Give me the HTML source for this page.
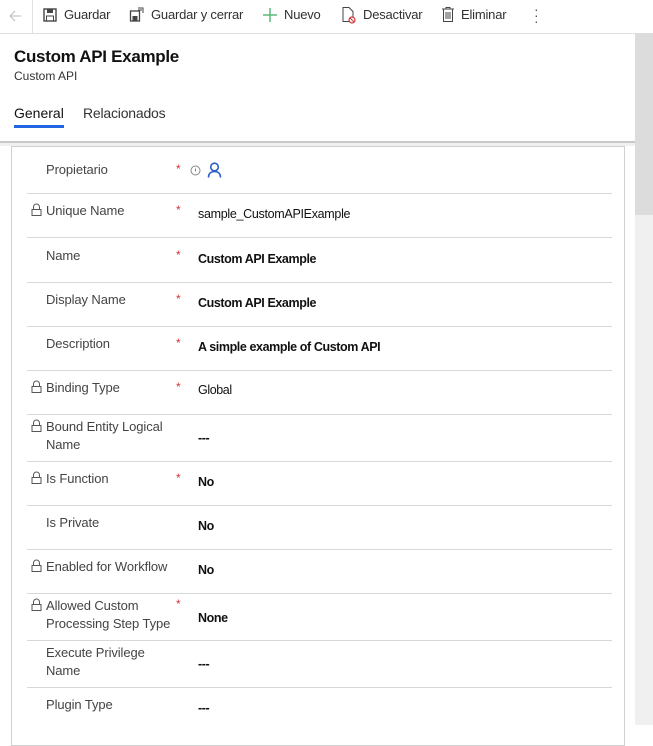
<!DOCTYPE html>
<html><head><meta charset="utf-8"><style>
*{margin:0;padding:0;box-sizing:border-box}
body{width:653px;height:725px;overflow:hidden;background:#fff;font-family:"Segoe UI","Liberation Sans",sans-serif;color:#323130;position:relative}
.a{position:absolute;white-space:nowrap}
.tb{font-size:13px;color:#323130;top:6px;line-height:18px;letter-spacing:-0.2px}
.lbl{font-size:13px;color:#444;line-height:18px;left:46px;letter-spacing:-0.1px}
.val{font-size:12.5px;color:#111;font-weight:bold;left:198px;line-height:18px;letter-spacing:-0.4px}
.star{color:#d13438;font-size:12px;left:176px}
.div{position:absolute;left:27px;width:585px;height:1px;background:#d8d8d8}
.lock{position:absolute;left:31px}
</style></head><body>
<div class="a" style="left:0;top:33px;width:635px;height:1px;background:#e1e1e1"></div>
<div class="a" style="left:32px;top:0;width:1px;height:33px;background:#e1e1e1"></div>
<svg class="a" style="left:7px;top:8px" width="16" height="16"><path d="M14 8H3M8 3L3 8l5 5" stroke="#bbb" fill="none" stroke-width="1"/></svg>
<svg class="a" style="left:43px;top:7px" width="14" height="16"><rect x="1" y="2" width="12" height="12" fill="none" stroke="#444" stroke-width="1.4"/><rect x="4" y="2" width="6" height="4" fill="#444"/><rect x="3.5" y="9" width="7" height="5" fill="none" stroke="#444"/></svg>
<div class="a tb" style="left:64px">Guardar</div>
<svg class="a" style="left:129px;top:6px" width="16" height="17"><rect x="1.5" y="5" width="9" height="10" fill="none" stroke="#444" stroke-width="1.3"/><rect x="3.5" y="10" width="5" height="5" fill="#444"/><path d="M9 2h5v5M9 4h4" stroke="#444" fill="none"/></svg>
<div class="a tb" style="left:151px">Guardar y cerrar</div>
<svg class="a" style="left:262px;top:7px" width="16" height="16"><path d="M8 1v14M1 8h14" stroke="#5cb87a" stroke-width="1.5"/></svg>
<div class="a tb" style="left:284px">Nuevo</div>
<svg class="a" style="left:341px;top:6px" width="16" height="18"><path d="M2 1.5h6l4 4v10H2z" fill="none" stroke="#444"/><circle cx="11" cy="14" r="3" fill="#fff" stroke="#d13438" stroke-width="1.2"/><path d="M9 12l4 4" stroke="#d13438"/></svg>
<div class="a tb" style="left:363px">Desactivar</div>
<svg class="a" style="left:441px;top:6px" width="14" height="17"><path d="M1 3h12M5 3V1.5h4V3M2.5 3.5v12h9v-12M5 6v7M7 6v7M9 6v7" stroke="#444" fill="none"/></svg>
<div class="a tb" style="left:461px">Eliminar</div>
<div class="a" style="left:534px;top:6px;font-size:14px;color:#555;line-height:6px;width:4px;text-align:center">·<br>·<br>·</div>
<div class="a" style="left:635px;top:33px;width:18px;height:692px;background:#f0f0f0"></div>
<div class="a" style="left:635px;top:33px;width:18px;height:182px;background:#dcdcdc"></div>
<div class="a" style="left:14px;top:46px;font-size:17px;font-weight:600;color:#111;line-height:22px;letter-spacing:-0.3px">Custom API Example</div>
<div class="a" style="left:14px;top:68px;font-size:12px;color:#333;line-height:16px">Custom API</div>
<div class="a" style="left:14px;top:104px;font-size:14px;color:#111;line-height:18px">General</div>
<div class="a" style="left:83px;top:104px;font-size:14px;color:#333;line-height:18px;letter-spacing:-0.2px">Relacionados</div>
<div class="a" style="left:14px;top:125px;width:50px;height:3px;background:#2266e3"></div>
<div class="a" style="left:0;top:141px;width:635px;height:2px;background:#c8c8c8"></div>
<div class="a" style="left:0;top:143px;width:635px;height:3px;background:#f0f0f0"></div>
<div class="a" style="left:11px;top:146px;width:614px;height:600px;border:1px solid #d0d0d0;background:#fff"></div>
<div class="div" style="top:193px"></div><div class="div" style="top:237px"></div><div class="div" style="top:282px"></div><div class="div" style="top:326px"></div><div class="div" style="top:370px"></div><div class="div" style="top:414px"></div><div class="div" style="top:461px"></div><div class="div" style="top:505px"></div><div class="div" style="top:549px"></div><div class="div" style="top:593px"></div><div class="div" style="top:640px"></div><div class="div" style="top:687px"></div>
<div class="a lbl" style="top:161px">Propietario</div><div class="a star" style="top:162px">*</div>
<svg class="a" style="left:190px;top:165px" width="11" height="11"><circle cx="5.5" cy="5.5" r="4.5" fill="none" stroke="#888"/><path d="M5.5 3.5v3" stroke="#888"/></svg>
<svg class="a" style="left:207px;top:162px" width="15" height="16"><circle cx="7.5" cy="5" r="3.8" fill="none" stroke="#2a5fc4" stroke-width="1.6"/><path d="M1.5 15.5c0-4 2.5-6 6-6s6 2 6 6" fill="none" stroke="#2a5fc4" stroke-width="1.6"/></svg>
<div class="a lbl" style="top:202px">Unique Name</div><div class="a star" style="top:203px">*</div><div class="a val" style="top:205px;font-weight:normal;letter-spacing:-0.3px">sample_CustomAPIExample</div>
<div class="a lbl" style="top:247px">Name</div><div class="a star" style="top:248px">*</div><div class="a val" style="top:250px">Custom API Example</div>
<div class="a lbl" style="top:291px">Display Name</div><div class="a star" style="top:292px">*</div><div class="a val" style="top:294px">Custom API Example</div>
<div class="a lbl" style="top:335px">Description</div><div class="a star" style="top:336px">*</div><div class="a val" style="top:338px">A simple example of Custom API</div>
<div class="a lbl" style="top:379px">Binding Type</div><div class="a star" style="top:380px">*</div><div class="a val" style="top:381px;font-weight:normal">Global</div>
<div class="a lbl" style="top:418px">Bound Entity Logical</div><div class="a lbl" style="top:436px">Name</div><div class="a val" style="top:429px">---</div>
<div class="a lbl" style="top:470px">Is Function</div><div class="a star" style="top:471px">*</div><div class="a val" style="top:473px">No</div>
<div class="a lbl" style="top:514px">Is Private</div><div class="a val" style="top:517px">No</div>
<div class="a lbl" style="top:558px">Enabled for Workflow</div><div class="a val" style="top:561px">No</div>
<div class="a lbl" style="top:597px">Allowed Custom</div><div class="a lbl" style="top:615px">Processing Step Type</div><div class="a star" style="top:597px">*</div><div class="a val" style="top:609px">None</div>
<div class="a lbl" style="top:644px">Execute Privilege</div><div class="a lbl" style="top:662px">Name</div><div class="a val" style="top:655px">---</div>
<div class="a lbl" style="top:696px">Plugin Type</div><div class="a val" style="top:699px">---</div>
<svg class="lock" style="top:203px" width="11" height="13"><path d="M2.5 6V4a3 3 0 0 1 6 0v2" fill="none" stroke="#555"/><rect x="1" y="6.5" width="9" height="6" fill="none" stroke="#555"/></svg>
<svg class="lock" style="top:380px" width="11" height="13"><path d="M2.5 6V4a3 3 0 0 1 6 0v2" fill="none" stroke="#555"/><rect x="1" y="6.5" width="9" height="6" fill="none" stroke="#555"/></svg>
<svg class="lock" style="top:419px" width="11" height="13"><path d="M2.5 6V4a3 3 0 0 1 6 0v2" fill="none" stroke="#555"/><rect x="1" y="6.5" width="9" height="6" fill="none" stroke="#555"/></svg>
<svg class="lock" style="top:471px" width="11" height="13"><path d="M2.5 6V4a3 3 0 0 1 6 0v2" fill="none" stroke="#555"/><rect x="1" y="6.5" width="9" height="6" fill="none" stroke="#555"/></svg>
<svg class="lock" style="top:559px" width="11" height="13"><path d="M2.5 6V4a3 3 0 0 1 6 0v2" fill="none" stroke="#555"/><rect x="1" y="6.5" width="9" height="6" fill="none" stroke="#555"/></svg>
<svg class="lock" style="top:598px" width="11" height="13"><path d="M2.5 6V4a3 3 0 0 1 6 0v2" fill="none" stroke="#555"/><rect x="1" y="6.5" width="9" height="6" fill="none" stroke="#555"/></svg>
</body></html>
